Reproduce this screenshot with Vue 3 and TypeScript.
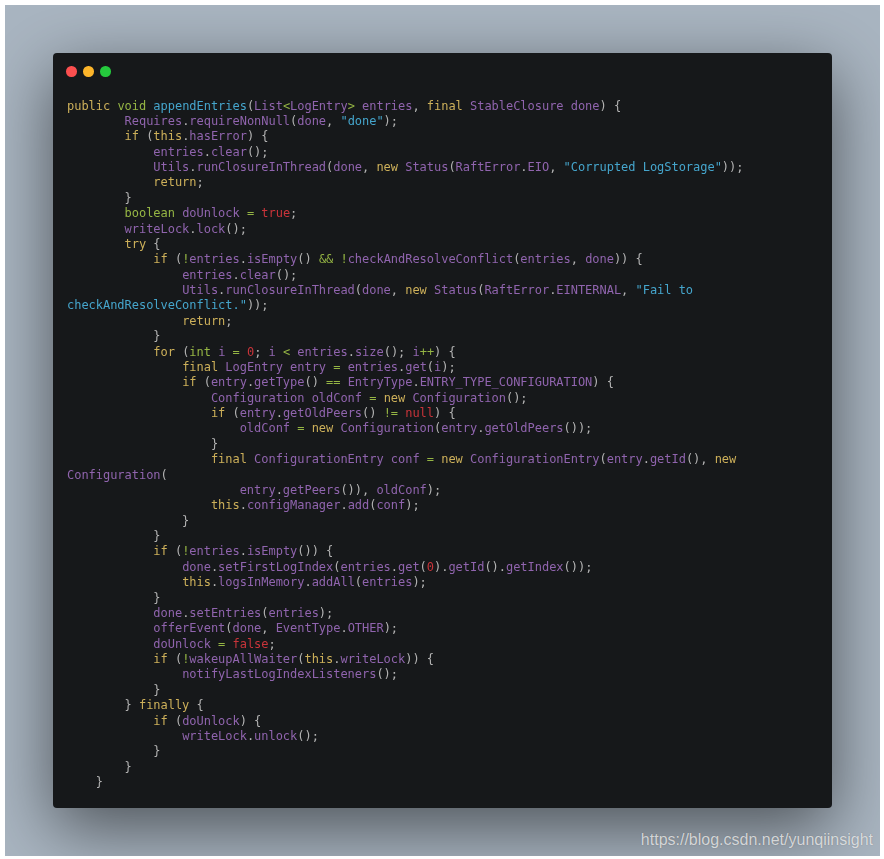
<script setup lang="ts">
const source = `public void appendEntries(List<LogEntry> entries, final StableClosure done) {
        Requires.requireNonNull(done, "done");
        if (this.hasError) {
            entries.clear();
            Utils.runClosureInThread(done, new Status(RaftError.EIO, "Corrupted LogStorage"));
            return;
        }
        boolean doUnlock = true;
        writeLock.lock();
        try {
            if (!entries.isEmpty() && !checkAndResolveConflict(entries, done)) {
                entries.clear();
                Utils.runClosureInThread(done, new Status(RaftError.EINTERNAL, "Fail to
checkAndResolveConflict."));
                return;
            }
            for (int i = 0; i < entries.size(); i++) {
                final LogEntry entry = entries.get(i);
                if (entry.getType() == EntryType.ENTRY_TYPE_CONFIGURATION) {
                    Configuration oldConf = new Configuration();
                    if (entry.getOldPeers() != null) {
                        oldConf = new Configuration(entry.getOldPeers());
                    }
                    final ConfigurationEntry conf = new ConfigurationEntry(entry.getId(), new
Configuration(
                        entry.getPeers()), oldConf);
                    this.configManager.add(conf);
                }
            }
            if (!entries.isEmpty()) {
                done.setFirstLogIndex(entries.get(0).getId().getIndex());
                this.logsInMemory.addAll(entries);
            }
            done.setEntries(entries);
            offerEvent(done, EventType.OTHER);
            doUnlock = false;
            if (!wakeupAllWaiter(this.writeLock)) {
                notifyLastLogIndexListeners();
            }
        } finally {
            if (doUnlock) {
                writeLock.unlock();
            }
        }
    }`

interface Token {
  text: string
  kind: string
}

const pattern =
  /("[^"]*")|\b(public|final|if|this|new|return|try|for|finally)\b|\b(void|int|boolean)\b|\b(true|false|null|\d+)\b|\b(appendEntries)\b|(==|!=|&&|\+\+|[=<>!])|([A-Za-z_]\w*)/g

function tokenize(text: string): Token[] {
  const kinds = ['str', 'kw', 'type', 'lit', 'fn', 'op', 'id']
  const out: Token[] = []
  let last = 0
  for (const m of text.matchAll(pattern)) {
    const at = m.index ?? 0
    if (at > last) out.push({ text: text.slice(last, at), kind: 'pn' })
    const group = m.slice(1).findIndex((g) => g !== undefined)
    out.push({ text: m[0], kind: kinds[group] })
    last = at + m[0].length
  }
  if (last < text.length) out.push({ text: text.slice(last), kind: 'pn' })
  return out
}

// Strings may span a wrapped line, so tokens are cut into rows after tokenizing.
function toRows(tokens: Token[]): Token[][] {
  const rows: Token[][] = [[]]
  for (const token of tokens) {
    token.text.split('\n').forEach((part, index) => {
      if (index > 0) rows.push([])
      if (part) rows[rows.length - 1].push({ text: part, kind: token.kind })
    })
  }
  return rows
}

const rows = toRows(tokenize(source))
</script>

<template>
  <div class="page">
    <div class="backdrop">
      <section class="window">
        <header class="controls">
          <span class="dot red"></span>
          <span class="dot yellow"></span>
          <span class="dot green"></span>
        </header>
        <div class="code">
          <div v-for="(row, r) in rows" :key="r" class="row"><span v-for="(t, i) in row" :key="i" :class="t.kind">{{ t.text }}</span></div>
        </div>
      </section>
      <span class="mark">https://blog.csdn.net/yunqiinsight</span>
    </div>
  </div>
</template>

<style>
html,
body {
  margin: 0;
  background: #fff;
}
</style>

<style scoped>
.page {
  width: 884px;
  height: 859px;
  box-sizing: border-box;
  padding: 5px 4px 3px 5px;
  overflow: hidden;
  background: #fff;
}
.backdrop {
  position: relative;
  height: 851px;
  box-sizing: border-box;
  padding: 48px;
  overflow: hidden;
  background: #a9b5c1;
}
.window {
  height: 755px;
  box-sizing: border-box;
  border-radius: 4px;
  background: #16181a;
  box-shadow: 0 20px 68px rgba(0, 0, 0, 0.55);
}
.controls {
  display: flex;
  gap: 6.5px;
  padding: 13px 0 0 13px;
}
.dot {
  width: 10.5px;
  height: 10.5px;
  border-radius: 50%;
}
.red { background: #fb4f4f; }
.yellow { background: #fdb52a; }
.green { background: #25c93d; }
.code {
  margin: 22px 0 0 14px;
  font-family: "DejaVu Sans Mono", monospace;
  font-size: 12px;
  letter-spacing: -0.03px;
  color: #a9a9a9;
  filter: blur(0.4px);
}
.row {
  height: 15.39px;
  line-height: 15.39px;
  white-space: pre;
}
.str { color: #45a5cc; }
.kw { color: #cdb05a; }
.type { color: #95b544; }
.lit { color: #c9343a; }
.fn { color: #45a5cc; }
.op { color: #95b544; }
.id { color: #9064ae; }
.pn { color: #b4b4b4; }
.mark {
  position: absolute;
  right: 7px;
  bottom: 6px;
  font-family: "Liberation Sans", Arial, sans-serif;
  font-size: 16px;
  line-height: 20px;
  color: rgba(255, 255, 255, 0.72);
  text-shadow: 0 0 1px rgba(0, 0, 0, 0.3);
}
</style>
